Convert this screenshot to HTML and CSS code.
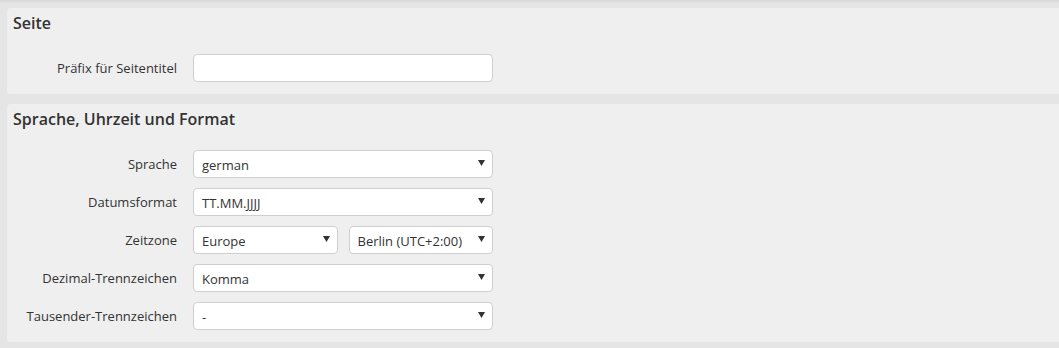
FILE: index.html
```html
<!DOCTYPE html>
<html lang="de">
<head>
<meta charset="utf-8">
<title>Einstellungen</title>
<link rel="stylesheet" href="styles.css">
</head>
<body>
<div class="topshade"></div>
<main class="page">
  <section class="panel">
    <h2 class="panel-title">Seite</h2>
    <div class="form">
      <label class="label">Präfix für Seitentitel</label>
      <div class="field"><input class="input" type="text"></div>
    </div>
  </section>
  <section class="panel">
    <h2 class="panel-title">Sprache, Uhrzeit und Format</h2>
    <div class="form">
      <label class="label">Sprache</label>
      <div class="field"><div class="select"><span>german</span><svg class="arrow" width="7" height="6" viewBox="0 0 7 6"><path d="M0 0H7L3.5 6Z"/></svg></div></div>
      <label class="label">Datumsformat</label>
      <div class="field"><div class="select"><span>TT.MM.JJJJ</span><svg class="arrow" width="7" height="6" viewBox="0 0 7 6"><path d="M0 0H7L3.5 6Z"/></svg></div></div>
      <label class="label">Zeitzone</label>
      <div class="field split">
        <div class="select"><span>Europe</span><svg class="arrow" width="7" height="6" viewBox="0 0 7 6"><path d="M0 0H7L3.5 6Z"/></svg></div>
        <div class="select"><span>Berlin (UTC+2:00)</span><svg class="arrow" width="7" height="6" viewBox="0 0 7 6"><path d="M0 0H7L3.5 6Z"/></svg></div>
      </div>
      <label class="label">Dezimal-Trennzeichen</label>
      <div class="field"><div class="select"><span>Komma</span><svg class="arrow" width="7" height="6" viewBox="0 0 7 6"><path d="M0 0H7L3.5 6Z"/></svg></div></div>
      <label class="label">Tausender-Trennzeichen</label>
      <div class="field"><div class="select"><span>-</span><svg class="arrow" width="7" height="6" viewBox="0 0 7 6"><path d="M0 0H7L3.5 6Z"/></svg></div></div>
    </div>
  </section>
</main>
</body>
</html>
```
FILE: styles.css
```css
html, body {
  margin: 0;
  padding: 0;
  background: #e5e5e5;
  overflow: hidden;
  font-family: "Open Sans", "DejaVu Sans", sans-serif;
  color: #333;
}
.topshade {
  height: 3px;
  background: linear-gradient(#d6d6d6, #e5e5e5);
}
.page {
  padding: 5px 0 0 7px;
  display: flex;
  flex-direction: column;
  gap: 10px;
  margin-right: -20px;
}
.panel {
  background: #efefef;
  border-radius: 4px;
  padding: 4px 6px 12px 6px;
}
.panel-title {
  margin: 0;
  font-size: 16px;
  line-height: 22px;
  font-weight: 600;
  color: #333;
}
.form {
  margin-top: 20px;
  display: grid;
  grid-template-columns: 164px 300px;
  column-gap: 16px;
  row-gap: 10px;
  align-items: center;
}
.label {
  text-align: right;
  font-size: 13px;
  color: #333;
}
.field {
  height: 28px;
}
.split {
  display: flex;
  gap: 11px;
}
.input, .select {
  box-sizing: border-box;
  width: 100%;
  height: 28px;
  border: 1px solid #cfcfcf;
  border-radius: 4px;
  background: #fff;
  font-family: inherit;
  font-size: 13px;
  color: #333;
  margin: 0;
}
.input {
  display: block;
  padding: 0 8px;
  outline: none;
}
.select {
  display: flex;
  align-items: center;
  justify-content: space-between;
  padding: 2px 8px 0 8px;
}
.split .select {
  flex: 1;
}
.arrow {
  fill: #333;
  margin-top: -4px;
  margin-right: -1px;
}
```
